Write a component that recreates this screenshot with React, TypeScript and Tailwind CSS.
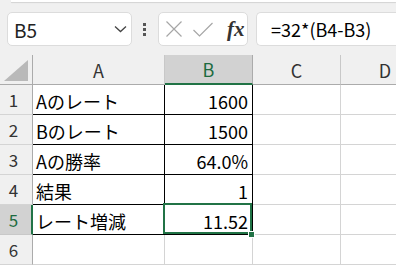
const rows = [
  { n: 1, a: "Aのレート", b: "1600" },
  { n: 2, a: "Bのレート", b: "1500" },
  { n: 3, a: "Aの勝率", b: "64.0%" },
  { n: 4, a: "結果", b: "1" },
  { n: 5, a: "レート増減", b: "11.52" },
  { n: 6, a: "", b: "" },
];

const App = () => {
  return (
    <div className="w-[396px] h-[265px] overflow-hidden bg-[#f0f0f0] font-['Noto_Sans_CJK_JP',sans-serif] text-black">
      <div className="ml-[11px] h-[2px] bg-white shadow-[0_1px_1px_rgba(0,0,0,0.12)]" />

      {/* formula bar */}
      <div className="flex items-start h-[53px] pt-[10px] pl-[7px]">
        <div className="shrink-0 w-[125px] h-[34px] rounded-[5px] border border-[#dcdcdc] bg-white flex items-center justify-between pl-[6px] pr-[4px]">
          <span className="text-[19px] leading-none text-[#222]">B5</span>
          <svg width="13" height="8" viewBox="0 0 13 8" fill="none" stroke="#444" strokeWidth="1.3">
            <path d="M1 1.5 L6.5 6.5 L12 1.5" />
          </svg>
        </div>
        <div className="shrink-0 ml-[11px] mt-[11px] flex flex-col gap-[2px]">
          <div className="w-[3px] h-[3px] bg-[#555]" />
          <div className="w-[3px] h-[3px] bg-[#555]" />
          <div className="w-[3px] h-[3px] bg-[#555]" />
        </div>
        <div className="shrink-0 ml-[12px] w-[90px] h-[34px] rounded-[5px] border border-[#dcdcdc] bg-white flex items-center pl-[7px]">
          <svg width="16" height="16" viewBox="0 0 16 16" fill="none" stroke="#a6a6a6" strokeWidth="1.2">
            <path d="M0.5 0.5 L15.5 15.5 M15.5 0.5 L0.5 15.5" />
          </svg>
          <svg className="ml-[11px]" width="20" height="15" viewBox="0 0 20 15" fill="none" stroke="#a6a6a6" strokeWidth="1.2">
            <path d="M0.5 8 L6.5 14 L19.5 1" />
          </svg>
          <span className="ml-[14px] font-['Liberation_Serif',serif] italic font-bold text-[21px] leading-none text-[#333]">
            fx
          </span>
        </div>
        <div className="shrink-0 ml-[8px] w-[160px] h-[34px] rounded-l-[5px] border border-r-0 border-[#dcdcdc] bg-white flex items-center pl-[14px]">
          <span className="text-[18px] leading-none whitespace-nowrap">=32*(B4-B3)</span>
        </div>
      </div>

      {/* column headers */}
      <div className="flex h-[30px] text-[18px] leading-none text-[#333]">
        <div className="shrink-0 w-[33px] border-r border-b border-[#ababab] flex items-end justify-center pb-[3px]">
          <svg width="24" height="21" viewBox="0 0 24 21">
            <polygon points="24,0 24,21 0,21" fill="#b9b9b9" />
          </svg>
        </div>
        <div className="shrink-0 w-[132px] border-r border-b border-r-[#c8c8c8] border-b-[#ababab] flex items-center justify-center">A</div>
        <div className="shrink-0 w-[88px] bg-[#d2d2d2] border-r border-r-[#ababab] border-b-2 border-b-[#217346] flex items-center justify-center text-[#1d6b40]">B</div>
        <div className="shrink-0 w-[88px] border-r border-b border-r-[#c8c8c8] border-b-[#ababab] flex items-center justify-center">C</div>
        <div className="shrink-0 w-[88px] border-b border-[#ababab] flex items-center justify-center">D</div>
      </div>

      {/* cells */}
      {rows.map((r) => {
        const inTable = r.n <= 5;
        const sel = r.n === 5;
        return (
          <div key={r.n} className="flex h-[30px] text-[18px] leading-none">
            <div
              className={
                sel
                  ? "shrink-0 w-[33px] bg-[#d2d2d2] border-b border-b-[#c8c8c8] border-r-2 border-r-[#217346] flex items-center justify-center pr-[4px] text-[17px] text-[#1d6b40]"
                  : "shrink-0 w-[33px] border-b border-b-[#d4d4d4] border-r border-r-[#ababab] flex items-center justify-center pr-[5px] text-[17px] text-[#333]"
              }
            >
              {r.n}
            </div>
            <div
              className={
                inTable
                  ? "shrink-0 w-[132px] bg-white border-r border-b border-black flex items-center pl-[3px] pt-[2px]"
                  : "shrink-0 w-[132px] bg-white border-r border-b border-[#d4d4d4]"
              }
            >
              {r.a}
            </div>
            <div
              className={
                inTable
                  ? "shrink-0 relative w-[88px] bg-white border-r border-b border-black flex items-center justify-end pr-[4px] pt-[2px]"
                  : "shrink-0 w-[88px] bg-white border-r border-b border-[#d4d4d4]"
              }
            >
              {r.b}
              {sel && (
                <>
                  <div className="absolute -top-[2px] -left-[2px] right-0 bottom-0 border-2 border-[#217346]" />
                  <div className="absolute left-[83px] top-[26px] w-[7px] h-[7px] bg-[#217346] border border-white" />
                </>
              )}
            </div>
            <div className="shrink-0 w-[88px] bg-white border-r border-b border-[#d4d4d4]" />
            <div className="shrink-0 w-[88px] bg-white border-b border-[#d4d4d4]" />
          </div>
        );
      })}
    </div>
  );
};

export default App;
